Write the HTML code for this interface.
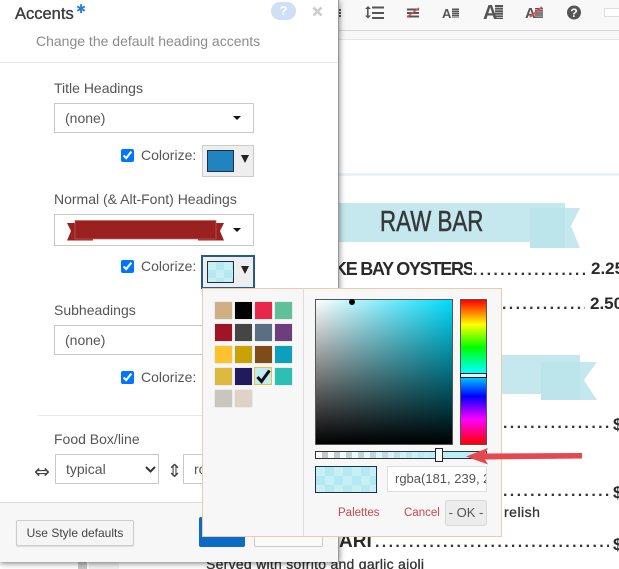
<!DOCTYPE html>
<html><head><meta charset="utf-8">
<style>
html,body{margin:0;padding:0;width:619px;height:569px;overflow:hidden;background:#fff;font-family:"Liberation Sans",Arial,sans-serif}
.a{position:absolute;box-sizing:border-box;white-space:nowrap}
.lbl{font-size:14px;color:#555;line-height:16px}
.sel{background:#fff;border:1px solid #c8c8c8;font-size:14px;color:#555;line-height:28px;padding-left:10px}
.car{width:0;height:0;border-left:4.5px solid transparent;border-right:4.5px solid transparent;border-top:4px solid #111}
.tri{width:0;height:0;border-left:4px solid transparent;border-right:4px solid transparent;border-top:8px solid #222}
.sb{background:#eee;border:1px solid #ccc}
.sw{border:1px solid #1c3040}
input{margin:0;position:absolute;width:13px;height:13px}
.chk{background-color:#c6f0f6;background-image:conic-gradient(#b6e8f2 25%,transparent 0 50%,#b6e8f2 0 75%,transparent 0);}
.m{font-weight:bold;color:#2a2a2a}
.d{position:absolute;color:#333;font-weight:bold;font-size:16px;letter-spacing:2.35px;line-height:16px;overflow:hidden;white-space:nowrap}
.s{position:absolute;width:17px;height:17px;box-shadow:0 0 1px #bbb}
</style></head><body>
<div class="a" style="left:0;top:0;width:619px;height:569px;overflow:hidden">

<!-- page background -->
<div class="a" style="left:338px;top:0;width:281px;height:31px;background:#f8f8f8;border-bottom:1px solid #d4d4d4"></div>
<div class="a" style="left:338px;top:31px;width:281px;height:9px;background:#f7f7f7;border-bottom:1px solid #e6e6e6"></div>
<svg class="a" style="left:335px;top:0" width="284" height="30" viewBox="335 0 284 30">
 <g fill="#555">
  <rect x="338" y="9" width="3" height="2"/><rect x="338" y="12" width="3" height="2"/><rect x="338" y="15" width="3" height="2"/>
  <rect x="372" y="6.500" width="12" height="2"/><rect x="372" y="12" width="12" height="2"/><rect x="372" y="17" width="12" height="2"/>
  <path d="M367 7h1.600v10h-1.600z"/><path d="M365 9l3-3 3 3zM365 15.500l3 3 3-3z"/>
  <rect x="407" y="8.500" width="12" height="2"/><rect x="407" y="12" width="12" height="2"/><rect x="407" y="15.500" width="12" height="2"/>
  <circle cx="574" cy="12.500" r="7"/>
 </g>
 <g fill="none" stroke="#555">
  <path d="M455.500 8.500V17.500" stroke-width="7" stroke-dasharray="1.500 .5"/>
  <path d="M499 5V19" stroke-width="8" stroke-dasharray="2 .6"/>
  <path d="M539 8V18" stroke-width="8" stroke-dasharray="1.500 .6"/>
 </g>
 <g font-family="Liberation Sans" font-weight="bold" fill="#555">
  <text x="442" y="18" font-size="13">A</text>
  <text x="483" y="19" font-size="20">A</text>
  <text x="525" y="18" font-size="15">A</text>
 </g>
 <text x="574" y="17" font-size="12" font-weight="bold" fill="#fff" text-anchor="middle" font-family="Liberation Sans">?</text>
 <path d="M407 17L419 8" stroke="#e25050" stroke-width="1.600"/>
 <path d="M530 17L542 7" stroke="#e25050" stroke-width="1.800"/>
 <rect x="604.500" y="8.500" width="20" height="8" fill="#fff" stroke="#ddd"/>
</svg>
<div class="a" style="left:338px;top:173px;width:281px;height:3px;background:#e8f4f4"></div>

<!-- ribbons -->
<svg class="a" style="left:338px;top:200px" width="281" height="205" viewBox="338 200 281 205">
 <path d="M338 203H565V208H580L571 226L580 248H530V242H338Z" fill="#c5e8ee"/>
 <path d="M530 208H565V248H530Z" fill="#bce4eb"/>
 <path d="M502 355H580V362H597L584 380L597 400H541V394H502Z" fill="#c5e8ee"/>
 <path d="M541 362H580V400H541Z" fill="#bce4eb"/>
</svg>
<div class="a" style="left:380px;top:205px;font-size:29px;line-height:34px;color:#35393c;transform-origin:0 50%;transform:scaleX(.77);-webkit-text-stroke:.5px #35393c">RAW BAR</div>

<div class="a m" style="left:338px;top:259px;width:134px;height:20px;overflow:hidden;font-size:18px;line-height:20px"><span style="position:absolute;left:-4px;top:0;letter-spacing:-1.25px">KE BAY OYSTERS</span></div>
<div class="d" style="left:473px;top:263px;width:112px;height:16px">....................................</div>
<div class="a m" style="left:591px;top:259px;font-size:17px;line-height:20px">2.25</div>
<div class="d" style="left:502px;top:297px;width:83px;height:16px">............................</div>
<div class="a m" style="left:590px;top:294px;font-size:17px;line-height:20px">2.50</div>
<div class="d" style="left:503px;top:416px;width:106px;height:16px">............................</div>
<div class="a m" style="left:613px;top:415px;font-size:17px;line-height:20px">$</div>
<div class="d" style="left:503px;top:484px;width:106px;height:16px">............................</div>
<div class="a m" style="left:613px;top:483px;font-size:17px;line-height:20px">$</div>
<div class="a" style="left:504px;top:504px;font-size:14px;line-height:16px;color:#333;letter-spacing:.5px;-webkit-text-stroke:.3px #333">relish</div>
<div class="a m" style="left:339px;top:531px;font-size:19px;line-height:22px">ARI</div>
<div class="d" style="left:375px;top:535px;width:234px;height:16px">..............................................................</div>
<div class="a m" style="left:613px;top:535px;font-size:17px;line-height:20px">$</div>
<div class="a" style="left:206px;top:556px;font-size:14px;line-height:16px;color:#333;letter-spacing:.27px;-webkit-text-stroke:.3px #333">Served with sofrito and garlic aioli</div>
<div class="a" style="left:78px;top:560px;width:9px;height:9px;background:#c6c6c6"></div>
<div class="a" style="left:89px;top:560px;width:30px;height:9px;background:#f1f1f1"></div>

<!-- dialog -->
<div class="a" style="left:0;top:0;width:339px;height:562px;background:#fff;box-shadow:0 1px 6px rgba(0,0,0,.55);border-right:1px solid #999"></div>
<div class="a" style="left:15px;top:4px;font-size:16.500px;line-height:20px;color:#3b3b3b;-webkit-text-stroke:.35px #3b3b3b">Accents</div>
<div class="a" style="left:76px;top:2px;font-size:12px;line-height:14px;color:#2a7fd0;font-family:'DejaVu Sans',sans-serif">&#10033;</div>
<div class="a" style="left:271px;top:2px;width:25px;height:18px;border-radius:9px;background:#cfe0f5;color:#fff;font-size:13px;font-weight:bold;line-height:18px;text-align:center">?</div>
<svg class="a" style="left:312px;top:6px" width="11" height="11"><path d="M1.500 1.500L9.500 9.500M9.500 1.500L1.500 9.500" stroke="#ccc" stroke-width="2.600"/></svg>
<div class="a" style="left:36px;top:33px;font-size:14px;line-height:16px;color:#8b8b8b">Change the default heading accents</div>
<div class="a" style="left:0;top:62px;width:338px;height:1px;background:#e8e8e8"></div>

<div class="a lbl" style="left:54px;top:80px">Title Headings</div>
<div class="a sel" style="left:54px;top:103px;width:200px;height:30px">(none)</div>
<div class="a car" style="left:233px;top:116px"></div>
<input type="checkbox" checked style="left:121px;top:149px">
<div class="a lbl" style="left:141px;top:147px">Colorize:</div>
<div class="a sb" style="left:202px;top:145px;width:52px;height:32px"></div>
<div class="a sw" style="left:207px;top:150px;width:27px;height:22px;background:#2184c0"></div>
<div class="a tri" style="left:241px;top:155px"></div>

<div class="a lbl" style="left:54px;top:191px">Normal (&amp; Alt-Font) Headings</div>
<div class="a sel" style="left:54px;top:214px;width:200px;height:32px"></div>
<svg class="a" style="left:66px;top:219px" width="160" height="24" viewBox="66 219 160 24">
 <path d="M67 223H75V239H93V240.500H67L71 231Z" fill="#9b2020"/>
 <path d="M224 223H216V239H198V240.500H224L220 231Z" fill="#9b2020"/>
 <rect x="75" y="220.500" width="141" height="18.500" fill="#9b2020" stroke="#c4615c" stroke-width=".7"/>
</svg>
<div class="a car" style="left:233px;top:228px"></div>
<input type="checkbox" checked style="left:121px;top:260px">
<div class="a lbl" style="left:141px;top:258px">Colorize:</div>
<div class="a" style="left:201px;top:255px;width:54px;height:34px;background:#eee;border:2px solid #2a5a80"></div>
<div class="a sw chk" style="left:207px;top:261px;width:27px;height:22px;background-size:16px 16px"></div>
<div class="a tri" style="left:241px;top:266px"></div>

<div class="a lbl" style="left:54px;top:302px">Subheadings</div>
<div class="a sel" style="left:54px;top:325px;width:200px;height:30px">(none)</div>
<input type="checkbox" checked style="left:121px;top:371px">
<div class="a lbl" style="left:141px;top:369px">Colorize:</div>
<div class="a" style="left:38px;top:415px;width:300px;height:1px;background:#e8e8e8"></div>

<div class="a lbl" style="left:54px;top:431px">Food Box/line</div>
<div class="a" style="left:34px;top:461px;font-size:19px;line-height:22px;color:#444;font-family:'DejaVu Sans',sans-serif">&#8660;</div>
<div class="a sel" style="left:55px;top:454px;width:104px;height:30px;padding-left:10px">typical</div>
<svg class="a" style="left:145px;top:465px" width="11" height="9"><path d="M1 2L5.500 6.500L10 2" fill="none" stroke="#333" stroke-width="2"/></svg>
<div class="a" style="left:167px;top:461px;font-size:18px;line-height:22px;color:#444;font-family:'DejaVu Sans',sans-serif">&#8661;</div>
<div class="a sel" style="left:183px;top:454px;width:60px;height:30px;padding-left:10px">ro</div>

<!-- footer -->
<div class="a" style="left:0;top:502px;width:338px;height:60px;background:#f7f7f7;border-top:1px solid #ddd"></div>
<div class="a" style="left:16px;top:520px;width:118px;height:26px;background:#f5f5f5;border:1px solid #ccc;border-radius:2px;font-size:12px;line-height:24px;color:#444;text-align:center;box-shadow:0 1px 1px #ddd">Use Style defaults</div>
<div class="a" style="left:199px;top:517px;width:46px;height:30px;background:#0b6bc6;border-radius:2px"></div>
<div class="a" style="left:254px;top:517px;width:69px;height:30px;background:#fafafa;border:1px solid #ccc;border-radius:2px"></div>

<!-- popup -->
<div class="a" style="left:202px;top:288px;width:300px;height:249px;background:#f7f7f7;border:1px solid #eccbaa"></div>
<div class="a" style="left:303px;top:289px;width:1px;height:247px;background:#ddd"></div>
<div class="s" style="left:215px;top:302px;background:#cdb083"></div>
<div class="s" style="left:235px;top:302px;background:#000"></div>
<div class="s" style="left:255px;top:302px;background:#e8274a"></div>
<div class="s" style="left:275px;top:302px;background:#61c09a"></div>
<div class="s" style="left:215px;top:324px;background:#a01525"></div>
<div class="s" style="left:235px;top:324px;background:#454545"></div>
<div class="s" style="left:255px;top:324px;background:#5a6e84"></div>
<div class="s" style="left:275px;top:324px;background:#6c3f7c"></div>
<div class="s" style="left:215px;top:346px;background:#fcc32e"></div>
<div class="s" style="left:235px;top:346px;background:#c9a205"></div>
<div class="s" style="left:255px;top:346px;background:#7f4b19"></div>
<div class="s" style="left:275px;top:346px;background:#0da0bd"></div>
<div class="s" style="left:215px;top:368px;background:#deb83f"></div>
<div class="s" style="left:235px;top:368px;background:#211a5c"></div>
<div class="a" style="left:254px;top:367px;width:18px;height:18px;background:#bfecf5;border:1px solid #e8c23c"></div>
<svg class="a" style="left:255px;top:367px" width="17" height="18"><path d="M2.500 10L6.500 14.500L14.500 3.500" fill="none" stroke="#111" stroke-width="3"/></svg>
<div class="s" style="left:275px;top:368px;background:#2dbfb3"></div>
<div class="s" style="left:215px;top:390px;background:#c8c6be"></div>
<div class="s" style="left:235px;top:390px;background:#e0d2c6"></div>

<div class="a" style="left:315px;top:299px;width:138px;height:146px;border:1px solid #555;background:linear-gradient(to top,#000,rgba(0,0,0,0)),linear-gradient(to right,#fff,#00dcfc)"></div>
<div class="a" style="left:349px;top:299px;width:6px;height:6px;border-radius:50%;background:#000"></div>
<div class="a" style="left:460px;top:299px;width:27px;height:146px;border:1px solid #555;background:linear-gradient(to bottom,#f00,#ff0 17%,#0f0 33%,#0ff 50%,#00f 67%,#f0f 83%,#f00)"></div>
<div class="a" style="left:460px;top:373px;width:27px;height:5px;border:1px solid #1a1a1a;background:#d7f7ff"></div>

<div class="a" style="left:315px;top:451px;width:172px;height:8px;border:1px solid #333;background:linear-gradient(to right,rgba(181,239,250,0),#b9eef7 70%),repeating-conic-gradient(#c4c4c4 0 25%,#fff 0 50%) 0 0/12px 12px"></div>
<div class="a" style="left:435px;top:448px;width:8px;height:14px;border:1px solid #223;background:#fafafa"></div>
<div class="a sw chk" style="left:315px;top:466px;width:62px;height:27px;background-size:18px 18px"></div>
<div class="a" style="left:387px;top:466px;width:100px;height:26px;background:#fff;border:1px solid #ddd;overflow:hidden;font-size:13px;line-height:24px;color:#555;padding-left:7px">rgba(181, 239, 2</div>
<div class="a" style="left:338px;top:506px;font-size:11.500px;line-height:14px;color:#c8474c">Palettes</div>
<div class="a" style="left:404px;top:506px;font-size:11.500px;line-height:14px;color:#c8474c">Cancel</div>
<div class="a" style="left:445px;top:500px;width:42px;height:26px;background:#ececec;border:1px solid #d8d8d8;border-radius:3px;font-size:13px;line-height:24px;color:#555;text-align:center">- OK -</div>

<!-- red arrow -->
<svg class="a" style="left:460px;top:444px" width="126" height="24" viewBox="460 444 126 24">
 <path d="M466 456.500L488 448L485 453.500L582 453V458.500L485 459.500L488 464.500Z" fill="#e5484e"/>
</svg>
</div>
</body></html>
